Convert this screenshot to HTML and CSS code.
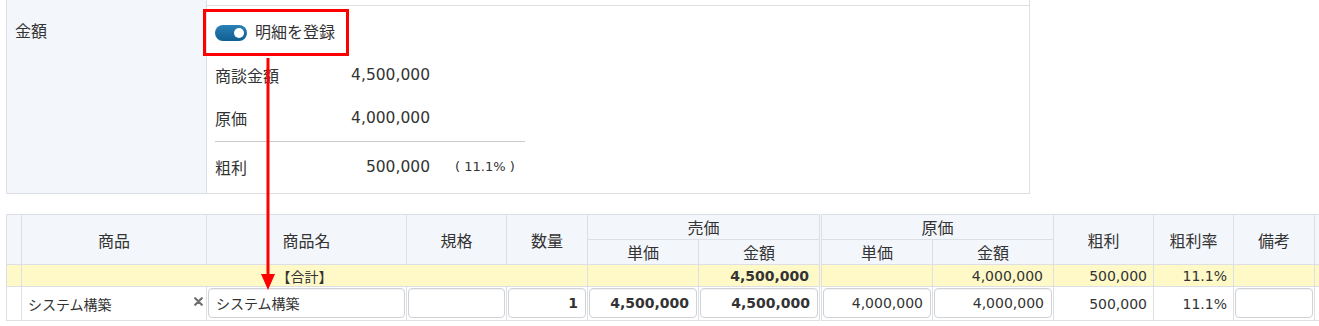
FILE: index.html
```html
<!DOCTYPE html>
<html lang="ja">
<head>
<meta charset="utf-8">
<title>金額</title>
<link rel="stylesheet" href="styles.css">
</head>
<body>
<div class="page">
  <div class="form">
    <div class="form-row prev">
      <div class="label"></div>
      <div class="value"></div>
    </div>
    <div class="form-row main">
      <div class="label">金額</div>
      <div class="value">
        <div class="toggle-line">
          <span class="switch"><span class="knob"></span></span>
          <span class="toggle-text">明細を登録</span>
        </div>
        <table class="summary">
          <colgroup><col class="s1"><col class="s2"><col class="s3"></colgroup>
          <tr class="r1"><td class="sl">商談金額</td><td class="sn">4,500,000</td><td></td></tr>
          <tr class="r2"><td class="sl">原価</td><td class="sn">4,000,000</td><td></td></tr>
          <tr class="r3"><td class="sl">粗利</td><td class="sn">500,000</td><td class="sp">( 11.1% )</td></tr>
        </table>
      </div>
    </div>
  </div>

  <div class="grid-wrap">
    <table class="grid">
      <colgroup>
        <col class="c0"><col class="c1"><col class="c2"><col class="c3"><col class="c4">
        <col class="c5"><col class="c6"><col class="c7"><col class="c8">
        <col class="c9"><col class="c10"><col class="c11"><col class="c12">
      </colgroup>
      <thead>
        <tr class="h1">
          <th rowspan="2"></th>
          <th rowspan="2">商品</th>
          <th rowspan="2">商品名</th>
          <th rowspan="2">規格</th>
          <th rowspan="2">数量</th>
          <th colspan="2">売価</th>
          <th colspan="2" class="grp">原価</th>
          <th rowspan="2">粗利</th>
          <th rowspan="2">粗利率</th>
          <th rowspan="2">備考</th>
          <th rowspan="2"></th>
        </tr>
        <tr class="h2">
          <th>単価</th>
          <th>金額</th>
          <th class="grp">単価</th>
          <th>金額</th>
        </tr>
      </thead>
      <tbody>
        <tr class="total">
          <td></td>
          <td colspan="4" class="tl">【合計】</td>
          <td></td>
          <td class="num b">4,500,000</td>
          <td class="grp"></td>
          <td class="num">4,000,000</td>
          <td class="num n6">500,000</td>
          <td class="num n6">11.1%</td>
          <td></td>
          <td></td>
        </tr>
        <tr class="data">
          <td></td>
          <td class="prod">
            <span class="prod-name">システム構築</span>
            <svg class="clear" width="9" height="9" viewBox="0 0 9 9"><path d="M1.2 1.2 L7.8 7.8 M7.8 1.2 L1.2 7.8" stroke="#6f6f6f" stroke-width="2.2" stroke-linecap="round"/></svg>
          </td>
          <td class="f"><input class="in" value="システム構築"></td>
          <td class="f"><input class="in" value=""></td>
          <td class="f"><input class="in r b" value="1"></td>
          <td class="f"><input class="in r b" value="4,500,000"></td>
          <td class="f"><input class="in r b" value="4,500,000"></td>
          <td class="f grp"><input class="in r" value="4,000,000"></td>
          <td class="f"><input class="in r" value="4,000,000"></td>
          <td class="num n6">500,000</td>
          <td class="num n6">11.1%</td>
          <td class="f"><input class="in" value=""></td>
          <td></td>
        </tr>
      </tbody>
    </table>
  </div>

  <div class="annot-box"></div>
  <svg class="annot-arrow" width="20" height="236" viewBox="0 0 20 236">
    <line x1="10" y1="2" x2="10" y2="220" stroke="#ff0000" stroke-width="3"/>
    <polygon points="3,218 17,218 10,234" fill="#ff0000"/>
  </svg>
</div>
</body>
</html>
```

FILE: styles.css
```css
* { box-sizing: border-box; }
html, body { margin: 0; padding: 0; overflow: hidden; background: #fff; }
body {
  font-family: "DejaVu Sans", "Noto Sans CJK JP", sans-serif;
  color: #333;
  font-size: 16px;
}
.page { position: relative; width: 1319px; height: 326px; overflow: hidden; }

/* top form */
.form {
  margin-left: 6px;
  width: 1024px;
  border-left: 1px solid #dcdfe3;
  border-right: 1px solid #dcdfe3;
  border-bottom: 1px solid #dcdfe3;
}
.form-row { display: flex; }
.prev { height: 6px; border-bottom: 1px solid #dcdfe3; }
.main { height: 187px; }
.label {
  width: 200px;
  flex: none;
  background: #f3f7fc;
  border-right: 1px solid #dcdfe3;
  padding: 14px 0 0 8px;
  line-height: 24px;
  font-size: 16px;
}
.value { flex: 1; padding: 15px 0 0 8px; }
.toggle-line { display: flex; align-items: center; height: 24px; gap: 8px; }
.switch {
  position: relative;
  width: 32px; height: 16px;
  border-radius: 8px;
  background: linear-gradient(#2b80b6, #0f5f92);
}
.knob {
  position: absolute;
  right: 3px; top: 3px;
  width: 10px; height: 10px;
  border-radius: 50%;
  background: #fff;
}
.toggle-text { font-size: 16px; line-height: 24px; }

.summary { border-collapse: collapse; margin-top: 9px; width: 310px; table-layout: fixed; }
.s1 { width: 100px; }
.s2 { width: 115px; }
.s3 { width: 95px; }
.summary td { padding: 0; vertical-align: middle; }
.summary .r1 td { height: 42px; }
.summary .r2 td { height: 45px; border-bottom: 1px solid #c9c9c9; }
.summary .r3 td { height: 51px; }
.sl { font-size: 16px; }
.sn { text-align: right; font-size: 15.5px; }
.sp { padding-left: 25px !important; font-size: 13px; white-space: nowrap; }

/* detail grid */
.grid-wrap { margin-top: 20px; padding-left: 6px; width: 1319px; overflow: hidden; }
.grid { border-collapse: collapse; table-layout: fixed; width: 1394px; }
.c0 { width: 15px; } .c1 { width: 185px; } .c2 { width: 200px; } .c3 { width: 100px; }
.c4 { width: 81px; } .c5 { width: 111px; } .c6 { width: 122px; } .c7 { width: 112px; }
.c8 { width: 121px; } .c9 { width: 100px; } .c10 { width: 80px; } .c11 { width: 81px; }
.c12 { width: 86px; }
.grid th, .grid td { border: 1px solid #dcdfe3; padding: 0; }
.grid th {
  background: #f3f7fc;
  font-weight: normal;
  font-size: 16px;
  text-align: center;
  vertical-align: middle;
}
.grid .h1 th, .grid .h2 th { height: 25px; }
.grid .grp { border-left: 3px double #dcdfe3; }
.total td { background: #fef9c6; height: 22px; font-size: 14px; }
.tl { text-align: center; }
.num { text-align: right; padding-right: 10px !important; font-size: 14px; white-space: nowrap; }
.num.n6 { padding-right: 6px !important; }
.num.b { font-weight: bold; }
.data td { height: 34px; font-size: 14px; vertical-align: middle; background: #fff; }
.data td.num { background: #fff; }
.prod { padding: 0 3px 0 6px !important; }
.prod .prod-name { float: left; }
.prod .clear { float: right; margin-top: 3px; }
.f { padding: 1px 1px 2px 1px !important; }
.in {
  display: block;
  width: 100%;
  height: 30px;
  border: 1px solid #cfd3d8;
  border-radius: 4px;
  background: #fff;
  box-shadow: inset 0 1px 1px rgba(0,0,0,0.06);
  padding: 0 7px;
  font-family: "DejaVu Sans", "Noto Sans CJK JP", sans-serif;
  font-size: 14px;
  color: #333;
  outline: none;
}
.in.r { text-align: right; }
.in.b { font-weight: bold; }

/* annotations */
.annot-box {
  position: absolute;
  left: 203px; top: 9px;
  width: 146px; height: 47px;
  border: 3px solid #ff0000;
}
.annot-arrow { position: absolute; left: 258px; top: 56px; }
```
